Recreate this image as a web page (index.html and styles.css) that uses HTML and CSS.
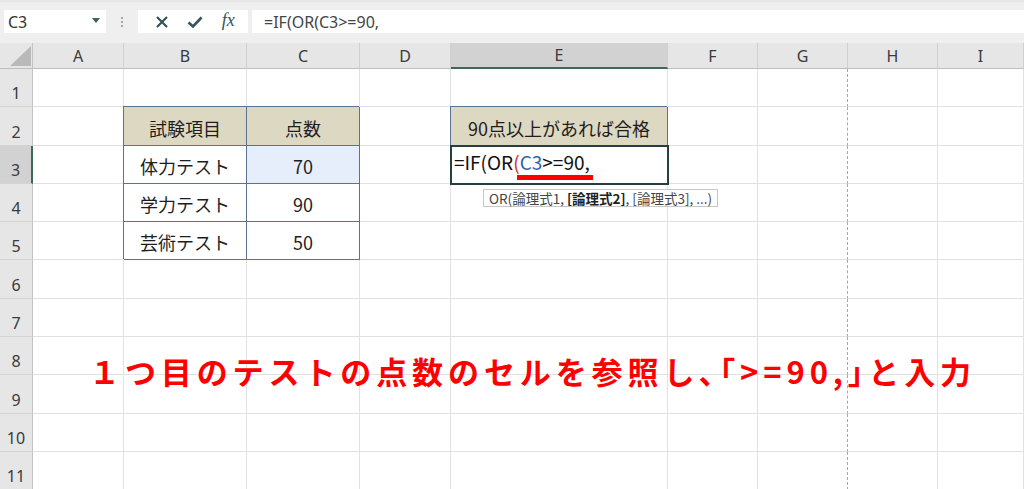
FILE: index.html
```html
<!DOCTYPE html>
<html lang="ja">
<head>
    <meta charset="UTF-8">
    <title>OR関数の入力</title>
    <link rel="stylesheet" href="styles.css">
</head>
<body>

    <!-- 名前ボックスと数式バー -->
    <div class="toolbar">
        <div class="namebox">
            <span>C3</span>
            <svg class="drop" width="8" height="5" viewBox="0 0 8 5"><polygon points="0,0 8,0 4,5" fill="#3f6060"/></svg>
        </div>
        <div class="grip"><i></i><i></i><i></i></div>
        <div class="fbuttons">
            <svg width="14" height="14" viewBox="0 0 14 14"><path d="M2 2 L12 12 M12 2 L2 12" stroke="#36525a" stroke-width="2.2" fill="none"/></svg>
            <svg width="16" height="14" viewBox="0 0 16 14"><path d="M1.5 7.5 L6 11.5 L14.5 2.5" stroke="#36525a" stroke-width="2.6" fill="none"/></svg>
            <span class="fx">fx</span>
        </div>
        <div class="fbar">=IF(OR(C3&gt;=90,</div>
    </div>

    <!-- シート -->
    <div class="sheet">
        <div class="corner"><svg width="33" height="26" viewBox="0 0 33 26"><polygon points="10,23 31,23 31,3" fill="#b9b9b9"/></svg></div>
        <div class="ch">A</div><div class="ch">B</div><div class="ch">C</div><div class="ch">D</div>
        <div class="ch sel">E</div><div class="ch">F</div><div class="ch">G</div><div class="ch">H</div><div class="ch">I</div>

        <!-- 1 -->
        <div class="rh">1</div>
        <div class="c"></div><div class="c"></div><div class="c"></div><div class="c"></div>
        <div class="c"></div><div class="c"></div><div class="c brk"></div><div class="c"></div><div class="c"></div>

        <!-- 2 -->
        <div class="rh">2</div>
        <div class="c"></div><div class="c t th">試験項目</div><div class="c t th">点数</div><div class="c"></div>
        <div class="c t th">90点以上があれば合格</div><div class="c"></div><div class="c brk"></div><div class="c"></div><div class="c"></div>

        <!-- 3 -->
        <div class="rh sel">3</div>
        <div class="c"></div><div class="c t">体力テスト</div><div class="c t hi">70</div><div class="c"></div>
        <div class="c active">
            <span>=IF(OR<span class="red">(</span><span class="ref"><span class="blue">C3</span>&gt;=90,</span></span>
            <div class="tip">OR(論理式1, <b>[論理式2]</b>, [論理式3], ...)</div>
        </div>
        <div class="c"></div><div class="c brk"></div><div class="c"></div><div class="c"></div>

        <!-- 4 -->
        <div class="rh">4</div>
        <div class="c"></div><div class="c t">学力テスト</div><div class="c t">90</div><div class="c"></div>
        <div class="c"></div><div class="c"></div><div class="c brk"></div><div class="c"></div><div class="c"></div>

        <!-- 5 -->
        <div class="rh">5</div>
        <div class="c"></div><div class="c t">芸術テスト</div><div class="c t">50</div><div class="c"></div>
        <div class="c"></div><div class="c"></div><div class="c brk"></div><div class="c"></div><div class="c"></div>

        <!-- 6 -->
        <div class="rh">6</div>
        <div class="c"></div><div class="c"></div><div class="c"></div><div class="c"></div>
        <div class="c"></div><div class="c"></div><div class="c brk"></div><div class="c"></div><div class="c"></div>

        <!-- 7 -->
        <div class="rh">7</div>
        <div class="c"></div><div class="c"></div><div class="c"></div><div class="c"></div>
        <div class="c"></div><div class="c"></div><div class="c brk"></div><div class="c"></div><div class="c"></div>

        <!-- 8 -->
        <div class="rh">8</div>
        <div class="c"></div><div class="c"></div><div class="c"></div><div class="c"></div>
        <div class="c"></div><div class="c"></div><div class="c brk"></div><div class="c"></div><div class="c"></div>

        <!-- 9 -->
        <div class="rh">9</div>
        <div class="c"></div><div class="c"></div><div class="c"></div><div class="c"></div>
        <div class="c"></div><div class="c"></div><div class="c brk"></div><div class="c"></div><div class="c"></div>

        <!-- 10 -->
        <div class="rh">10</div>
        <div class="c"></div><div class="c"></div><div class="c"></div><div class="c"></div>
        <div class="c"></div><div class="c"></div><div class="c brk"></div><div class="c"></div><div class="c"></div>

        <!-- 11 -->
        <div class="rh">11</div>
        <div class="c"></div><div class="c"></div><div class="c"></div><div class="c"></div>
        <div class="c"></div><div class="c"></div><div class="c brk"></div><div class="c"></div><div class="c"></div>

        <!-- 説明テキスト -->
        <div class="note">１つ目のテストの点数のセルを参照し､｢&gt;=90,｣と入力</div>
    </div>

</body>
</html>
```

FILE: styles.css
```css
/* 全体 */
body {
    margin: 0;
    width: 1024px;
    height: 489px;
    overflow: hidden;
    background: #ffffff;
    font-family: "Noto Sans", "Noto Sans CJK JP", sans-serif;
    color: #333;
}

/* 数式バーまわり */
.toolbar {
    height: 43px;
    box-sizing: border-box;
    padding: 8px 0 10px 4px;
    background: #efefef;
    border-top: 2px solid #e6e6e6;
    display: flex;
    align-items: stretch;
}

.namebox {
    width: 102px;
    background: #fff;
    display: flex;
    align-items: center;
    justify-content: space-between;
    padding: 0 6px 0 4px;
    box-sizing: border-box;
    font-size: 16px;
    color: #333;
}

.namebox .drop {
    margin-bottom: 2px;
}

.grip {
    width: 32px;
    display: flex;
    flex-direction: column;
    align-items: center;
    justify-content: center;
    gap: 2px;
}

.grip i {
    width: 2px;
    height: 2px;
    background: #a8a8a8;
}

.fbuttons {
    width: 110px;
    background: #fff;
    display: flex;
    align-items: center;
    justify-content: space-around;
    padding: 0 4px 0 8px;
    box-sizing: border-box;
}

.fbuttons .fx {
    font-family: "Liberation Serif", serif;
    font-style: italic;
    font-size: 18px;
    color: #36525a;
    margin-bottom: 2px;
}

.fbar {
    flex: 1;
    margin-left: 4px;
    background: #fff;
    padding-left: 12px;
    display: flex;
    align-items: center;
    font-size: 16px;
    color: #444;
}

/* シートのグリッド */
.sheet {
    position: relative;
    display: grid;
    grid-template-columns: 33px 91px 123px 113px 91px 217px 90px 90px 90px 1fr;
    grid-template-rows: 26px repeat(11, 38.3px);
    font-family: "Noto Sans CJK JP", sans-serif;
}

.corner {
    background: #e6e6e6;
    border-right: 1px solid #c4c4c4;
    border-bottom: 1px solid #bdbdbd;
    box-sizing: border-box;
}

.corner svg {
    display: block;
}

.ch {
    background: #e6e6e6;
    border-right: 1px solid #d0d0d0;
    border-bottom: 1px solid #bdbdbd;
    box-sizing: border-box;
    display: flex;
    align-items: center;
    justify-content: center;
    font-family: "Noto Sans", sans-serif;
    font-size: 16px;
    color: #3a3a3a;
}

.ch.sel {
    background: #d2d2d2;
    border-bottom: 2px solid #3c6a55;
}

.rh {
    background: #e6e6e6;
    border-right: 1px solid #c4c4c4;
    border-bottom: 1px solid #d4d4d4;
    box-sizing: border-box;
    display: flex;
    align-items: flex-end;
    justify-content: center;
    padding-bottom: 3px;
    font-family: "Noto Sans", sans-serif;
    font-size: 16px;
    line-height: 20px;
    color: #3a3a3a;
}

.rh.sel {
    background: #d2d2d2;
    border-right: 2px solid #3c6a55;
}

.c {
    border-right: 1px solid #e1e1e1;
    border-bottom: 1px solid #e1e1e1;
    box-sizing: border-box;
    display: flex;
    align-items: flex-end;
    justify-content: center;
    padding-bottom: 6px;
    font-size: 18px;
    line-height: 22px;
    color: #1e1e1e;
    white-space: nowrap;
}

/* 改ページの点線 */
.c.brk {
    border-right: 1px dashed #a8a8a8;
}

/* 表の罫線 */
.c.t {
    border-right-color: #5b7290;
    border-bottom-color: #5b7290;
    box-shadow: -1px -1px 0 #5b7290;
}

.c.th {
    background: #ddd8c2;
}

.c.hi {
    background: #e6eefc;
}

/* 編集中のセル */
.c.active {
    position: relative;
    z-index: 2;
    justify-content: flex-start;
    padding-left: 3px;
    padding-bottom: 10px;
    outline: 2px solid #233f3f;
    outline-offset: -1px;
    font-size: 19px;
    color: #111;
}

.red {
    color: #e0262a;
}

.blue {
    color: #2d62ad;
}

.ref {
    position: relative;
}

.ref::after {
    content: "";
    position: absolute;
    left: -3px;
    right: -3px;
    bottom: -5px;
    height: 5px;
    background: #ff0000;
}

.tip {
    position: absolute;
    left: 32px;
    top: 43px;
    height: 18px;
    box-sizing: border-box;
    padding: 0 5px;
    background: #fff;
    border: 1px solid #c8c8c8;
    font-size: 13.5px;
    line-height: 16px;
    color: #444;
}

.tip b {
    color: #222;
}

/* 赤い説明文 */
.note {
    position: absolute;
    left: 89px;
    top: 312px;
    font-size: 31px;
    line-height: 31px;
    font-weight: bold;
    letter-spacing: 4.9px;
    color: #ff0000;
    white-space: nowrap;
    z-index: 3;
}
```
